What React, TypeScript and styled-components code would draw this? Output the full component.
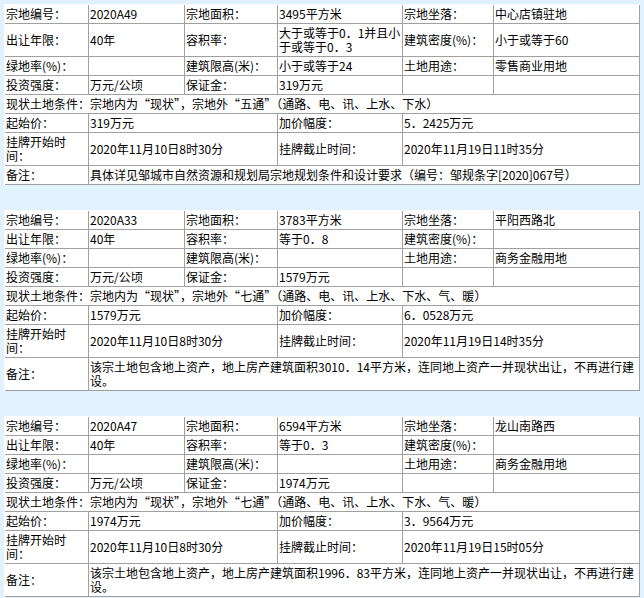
import React from "react";
import styled, { createGlobalStyle } from "styled-components";

const GlobalStyle = createGlobalStyle`
  body {
    margin: 0;
    background: #e1f1fd;
    font-family: "Liberation Sans Narrow", "Noto Sans CJK SC", sans-serif;
    color: #000;
  }
`;

const Page = styled.div`
  padding: 4px 4px 0;
  overflow: hidden;
`;

const TableStack = styled.div`
  display: flex;
  flex-direction: column;
  gap: 25px;
`;

const Sheet = styled.table`
  width: 636px;
  table-layout: fixed;
  border-collapse: separate;
  border-spacing: 0;
  background: #fff;
  border-top: 1px solid #fff;
  border-left: 1px solid #fff;
  font-size: 12px;
  line-height: 14px;
`;

const Cell = styled.td`
  padding: 2px 1px;
  border-right: 1px solid #a0a0a0;
  border-bottom: 1px solid #a0a0a0;
  vertical-align: middle;
  word-break: break-all;
`;

const FullWidth = styled.span`
  font-family: "Noto Sans CJK SC", sans-serif;
  font-feature-settings: "fwid" 1;
`;

const Notice = styled.p`
  margin: 0;
  padding-left: 74px;
  font-family: "Noto Sans CJK SC", sans-serif;
  font-size: 25px;
  line-height: 25px;
  white-space: nowrap;
`;

interface Parcel {
  code: string;
  area: string;
  location: string;
  years: string;
  plotRatio: string;
  density: string;
  greenRate: string;
  heightLimit: string;
  usage: string;
  intensity: string;
  deposit: string;
  condition: string;
  startPrice: string;
  step: string;
  openTime: string;
  closeTime: string;
  remark: string;
}

const PARCELS: Parcel[] = [
  {
    code: "2020A49",
    area: "3495平方米",
    location: "中心店镇驻地",
    years: "40年",
    plotRatio: "大于或等于0．1并且小于或等于0．3",
    density: "小于或等于60",
    greenRate: "",
    heightLimit: "小于或等于24",
    usage: "零售商业用地",
    intensity: "万元/公顷",
    deposit: "319万元",
    condition: "宗地内为“现状”，宗地外“五通”（通路、电、讯、上水、下水）",
    startPrice: "319万元",
    step: "5．2425万元",
    openTime: "2020年11月10日8时30分",
    closeTime: "2020年11月19日11时35分",
    remark:
      "具体详见邹城市自然资源和规划局宗地规划条件和设计要求（编号：邹规条字[2020]067号）",
  },
  {
    code: "2020A33",
    area: "3783平方米",
    location: "平阳西路北",
    years: "40年",
    plotRatio: "等于0．8",
    density: "",
    greenRate: "",
    heightLimit: "",
    usage: "商务金融用地",
    intensity: "万元/公顷",
    deposit: "1579万元",
    condition:
      "宗地内为“现状”，宗地外“七通”（通路、电、讯、上水、下水、气、暖）",
    startPrice: "1579万元",
    step: "6．0528万元",
    openTime: "2020年11月10日8时30分",
    closeTime: "2020年11月19日14时35分",
    remark:
      "该宗土地包含地上资产，地上房产建筑面积3010．14平方米，连同地上资产一并现状出让，不再进行建设。",
  },
  {
    code: "2020A47",
    area: "6594平方米",
    location: "龙山南路西",
    years: "40年",
    plotRatio: "等于0．3",
    density: "",
    greenRate: "",
    heightLimit: "",
    usage: "商务金融用地",
    intensity: "万元/公顷",
    deposit: "1974万元",
    condition:
      "宗地内为“现状”，宗地外“七通”（通路、电、讯、上水、下水、气、暖）",
    startPrice: "1974万元",
    step: "3．9564万元",
    openTime: "2020年11月10日8时30分",
    closeTime: "2020年11月19日15时05分",
    remark:
      "该宗土地包含地上资产，地上房产建筑面积1996．83平方米，连同地上资产一并现状出让，不再进行建设。",
  },
];

const COLUMNS = [84, 96, 93, 125, 91, 146];

// curly quotes and CJK punctuation are drawn full width, as in the original page
const withWideMarks = (text: string) =>
  text.split(/([“”（）．：，、。])/).map((part, i) =>
    /^[“”（）．：，、。]$/.test(part) ? (
      <FullWidth key={i}>{part}</FullWidth>
    ) : (
      part
    )
  );

const ParcelTable: React.FC<{ parcel: Parcel }> = ({ parcel }) => (
  <Sheet>
    <colgroup>
      {COLUMNS.map((w, i) => (
        <col key={i} style={{ width: w }} />
      ))}
    </colgroup>
    <tbody>
      <tr>
        <Cell>宗地编号：</Cell>
        <Cell>{parcel.code}</Cell>
        <Cell>宗地面积：</Cell>
        <Cell>{parcel.area}</Cell>
        <Cell>宗地坐落：</Cell>
        <Cell>{parcel.location}</Cell>
      </tr>
      <tr>
        <Cell>出让年限：</Cell>
        <Cell>{parcel.years}</Cell>
        <Cell>容积率：</Cell>
        <Cell>{withWideMarks(parcel.plotRatio)}</Cell>
        <Cell>建筑密度(%)：</Cell>
        <Cell>{parcel.density}</Cell>
      </tr>
      <tr>
        <Cell>绿地率(%)：</Cell>
        <Cell>{parcel.greenRate}</Cell>
        <Cell>建筑限高(米)：</Cell>
        <Cell>{parcel.heightLimit}</Cell>
        <Cell>土地用途：</Cell>
        <Cell>{parcel.usage}</Cell>
      </tr>
      <tr>
        <Cell>投资强度：</Cell>
        <Cell>{parcel.intensity}</Cell>
        <Cell>保证金：</Cell>
        <Cell>{parcel.deposit}</Cell>
        <Cell />
        <Cell />
      </tr>
      <tr>
        <Cell colSpan={6}>现状土地条件：{withWideMarks(parcel.condition)}</Cell>
      </tr>
      <tr>
        <Cell>起始价：</Cell>
        <Cell colSpan={2}>{parcel.startPrice}</Cell>
        <Cell>加价幅度：</Cell>
        <Cell colSpan={2}>{withWideMarks(parcel.step)}</Cell>
      </tr>
      <tr>
        <Cell>挂牌开始时间：</Cell>
        <Cell colSpan={2}>{parcel.openTime}</Cell>
        <Cell>挂牌截止时间：</Cell>
        <Cell colSpan={2}>{parcel.closeTime}</Cell>
      </tr>
      <tr>
        <Cell>备注：</Cell>
        <Cell colSpan={5}>{withWideMarks(parcel.remark)}</Cell>
      </tr>
    </tbody>
  </Sheet>
);

export default function App() {
  return (
    <>
      <GlobalStyle />
      <Page>
        <TableStack>
          {PARCELS.map((p) => (
            <ParcelTable key={p.code} parcel={p} />
          ))}
        </TableStack>
        <Notice>中华人民共和国境内外的法人、自然人和其他组织均可申请参加</Notice>
      </Page>
    </>
  );
}
